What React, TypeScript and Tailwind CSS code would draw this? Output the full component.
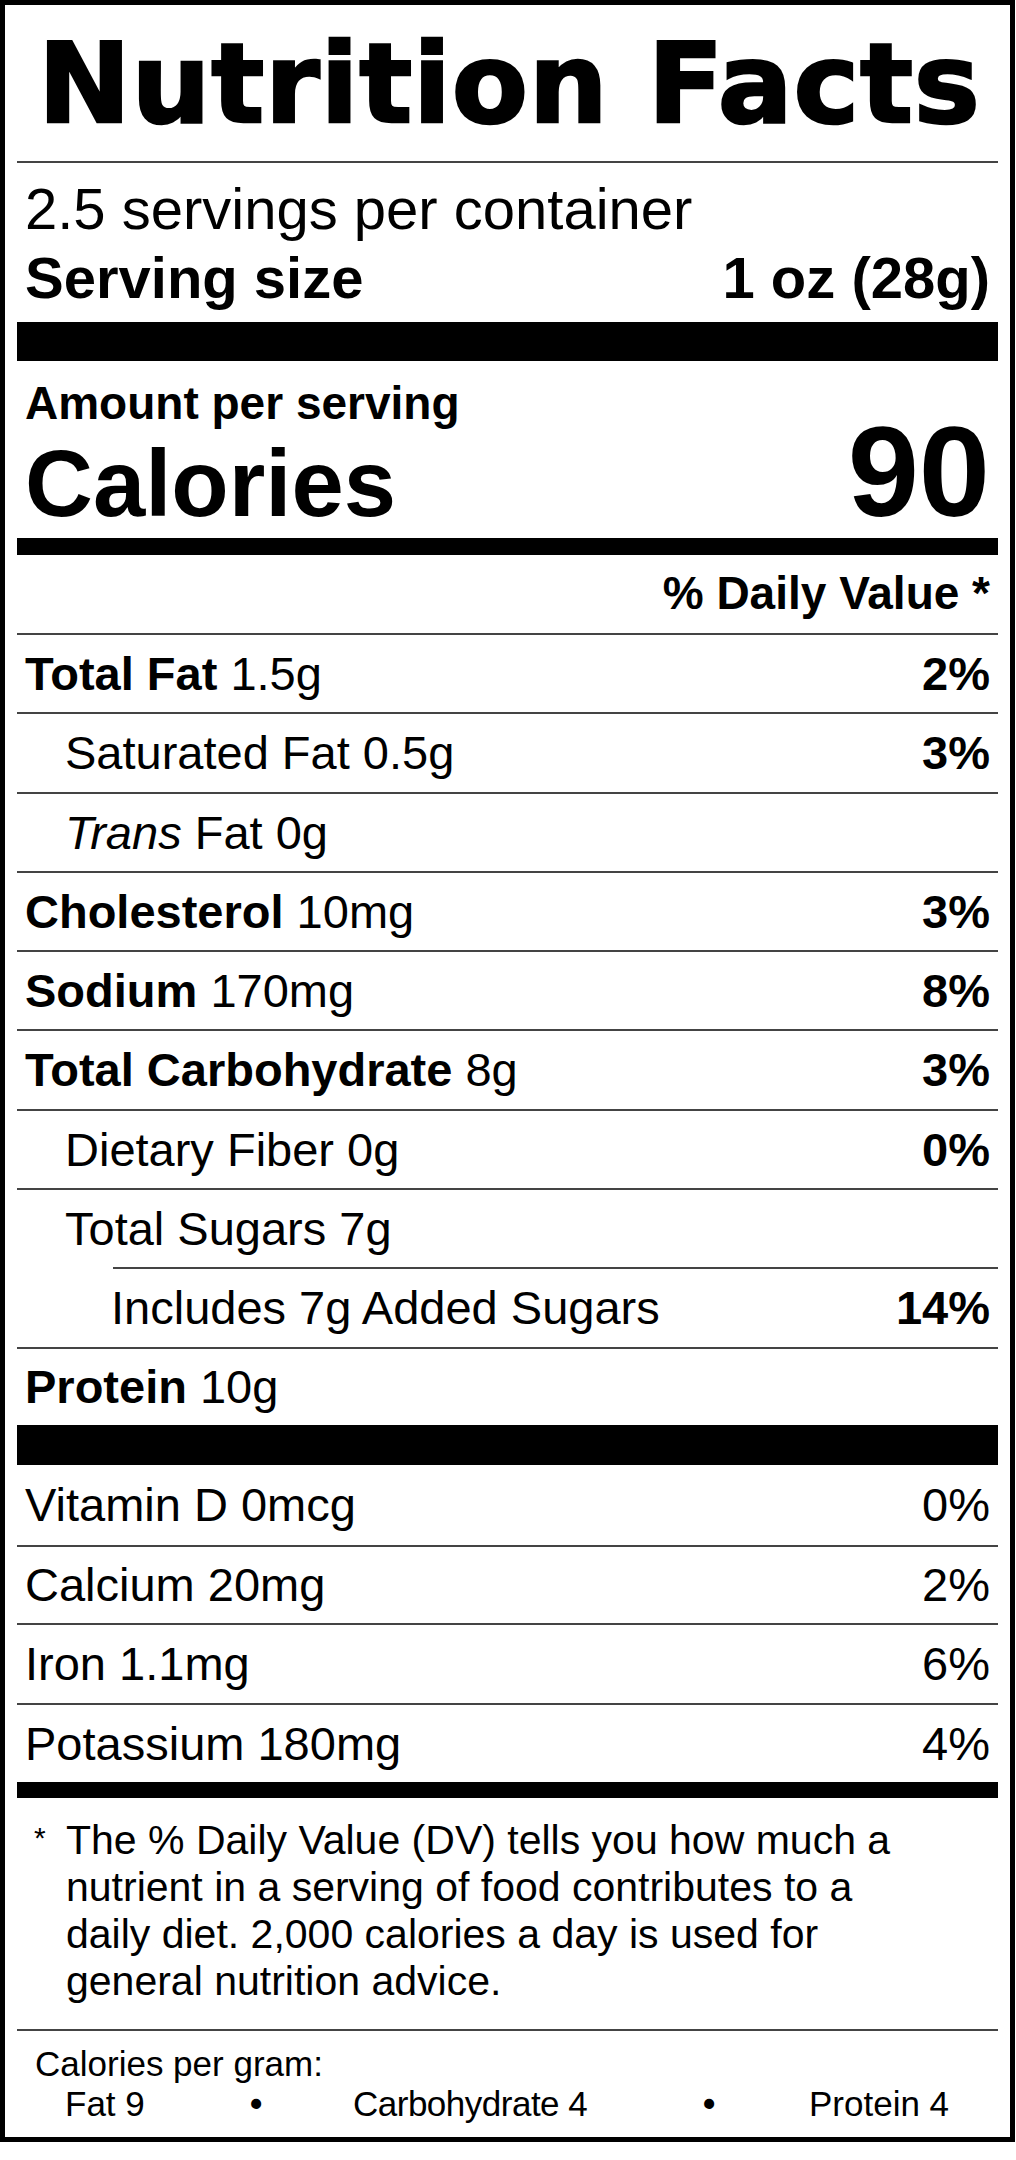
import React from "react";

type Row = {
  bold?: string;
  rest?: React.ReactNode;
  dv?: string;
  indent?: "none" | "one" | "two";
  hc: string;
};

const rows: Row[] = [
  { bold: "Total Fat", rest: " 1.5g", dv: "2%", indent: "none", hc: "h-[77px] leading-[77px]" },
  { rest: "Saturated Fat 0.5g", dv: "3%", indent: "one", hc: "h-[78px] leading-[78px]" },
  {
    rest: (
      <>
        <span className="italic">Trans</span> Fat 0g
      </>
    ),
    indent: "one",
    hc: "h-[77px] leading-[77px]",
  },
  { bold: "Cholesterol", rest: " 10mg", dv: "3%", indent: "none", hc: "h-[77px] leading-[77px]" },
  { bold: "Sodium", rest: " 170mg", dv: "8%", indent: "none", hc: "h-[77px] leading-[77px]" },
  { bold: "Total Carbohydrate", rest: " 8g", dv: "3%", indent: "none", hc: "h-[78px] leading-[78px]" },
  { rest: "Dietary Fiber 0g", dv: "0%", indent: "one", hc: "h-[77px] leading-[77px]" },
  { rest: "Total Sugars 7g", indent: "one", hc: "h-[77px] leading-[77px]" },
  { rest: "Includes 7g Added Sugars", dv: "14%", indent: "two", hc: "h-[78px] leading-[78px]" },
  { bold: "Protein", rest: " 10g", indent: "none", hc: "h-[76px] leading-[76px]" },
];

const vitamins = [
  { label: "Vitamin D 0mcg", dv: "0%", hc: "h-[80px] leading-[80px]" },
  { label: "Calcium 20mg", dv: "2%", hc: "h-[76px] leading-[76px]" },
  { label: "Iron 1.1mg", dv: "6%", hc: "h-[78px] leading-[78px]" },
  { label: "Potassium 180mg", dv: "4%", hc: "h-[77px] leading-[77px]" },
];

function Thin({ partial }: { partial?: boolean }) {
  return partial ? (
    <div className="ml-[96px] h-[2px] bg-[#444]" />
  ) : (
    <div className="h-[2px] bg-[#444]" />
  );
}

export default function App() {
  return (
    <div className="min-h-[2160px] w-[1016px] bg-white">
      <div className="w-[1015px] border-[5px] border-black bg-white px-[12px] text-black font-['Liberation_Sans',Arial,sans-serif]">
        {/* Title */}
        <div className="h-[156px] pt-[2px] pl-[21px] whitespace-nowrap font-['DejaVu_Sans',sans-serif] text-[111px] font-bold leading-[154px] tracking-[0.7px] [-webkit-text-stroke:2.5px_black]">
          Nutrition Facts
        </div>
        <Thin />

        {/* Servings */}
        <div className="h-[159px] px-[8px] pt-[17px]">
          <div className="text-[58px] leading-[58px] whitespace-nowrap">2.5 servings per container</div>
          <div className="mt-[11px] flex justify-between text-[58px] font-bold leading-[58px] whitespace-nowrap">
            <span>Serving size</span>
            <span>1 oz (28g)</span>
          </div>
        </div>
        <div className="h-[39px] bg-black" />

        {/* Calories */}
        <div className="flex h-[177px] items-end justify-between px-[8px] pb-[7px]">
          <div className="flex flex-col">
            <div className="text-[46px] font-bold leading-[46px] whitespace-nowrap">Amount per serving</div>
            <div className="mt-[11px] text-[94px] font-bold leading-[94px]">Calories</div>
          </div>
          <div className="text-[128px] font-bold leading-[118px]">90</div>
        </div>
        <div className="h-[17px] bg-black" />

        {/* DV header */}
        <div className="h-[78px] px-[8px] text-right text-[46px] font-bold leading-[76px]">% Daily Value *</div>

        {rows.map((r, i) => (
          <div key={i}>
            <Thin partial={r.indent === "two"} />
            <div
              className={`flex justify-between text-[47px] whitespace-nowrap pr-[8px] ${r.hc} ${
                r.indent === "one" ? "pl-[48px]" : r.indent === "two" ? "pl-[94px]" : "pl-[8px]"
              }`}
            >
              <span>
                {r.bold && <span className="font-bold">{r.bold}</span>}
                {r.rest}
              </span>
              {r.dv && <span className="font-bold">{r.dv}</span>}
            </div>
          </div>
        ))}

        <div className="h-[40px] bg-black" />

        {vitamins.map((v, i) => (
          <div key={i}>
            {i > 0 && <Thin />}
            <div className={`flex justify-between px-[8px] text-[47px] whitespace-nowrap ${v.hc}`}>
              <span>{v.label}</span>
              <span>{v.dv}</span>
            </div>
          </div>
        ))}

        <div className="h-[16px] bg-black" />

        {/* Footnote */}
        <div className="flex h-[231px] pt-[19px] pl-[17px]">
          <div className="w-[32px] text-[30px] leading-[42px]">*</div>
          <div className="text-[41px] leading-[47px] whitespace-nowrap">
            <div>The % Daily Value (DV) tells you how much a</div>
            <div>nutrient in a serving of food contributes to a</div>
            <div>daily diet. 2,000 calories a day is used for</div>
            <div>general nutrition advice.</div>
          </div>
        </div>
        <Thin />

        {/* Calories per gram */}
        <div className="h-[106px] pt-[13px] text-[35px] leading-[40px] whitespace-nowrap">
          <div className="pl-[18px]">Calories per gram:</div>
          <div className="flex pl-[48px]">
            <span className="w-[185px]">Fat 9</span>
            <span className="w-[103px] font-bold">•</span>
            <span className="w-[350px] tracking-[-0.5px]">Carbohydrate 4</span>
            <span className="w-[106px] font-bold">•</span>
            <span>Protein 4</span>
          </div>
        </div>
      </div>
    </div>
  );
}
